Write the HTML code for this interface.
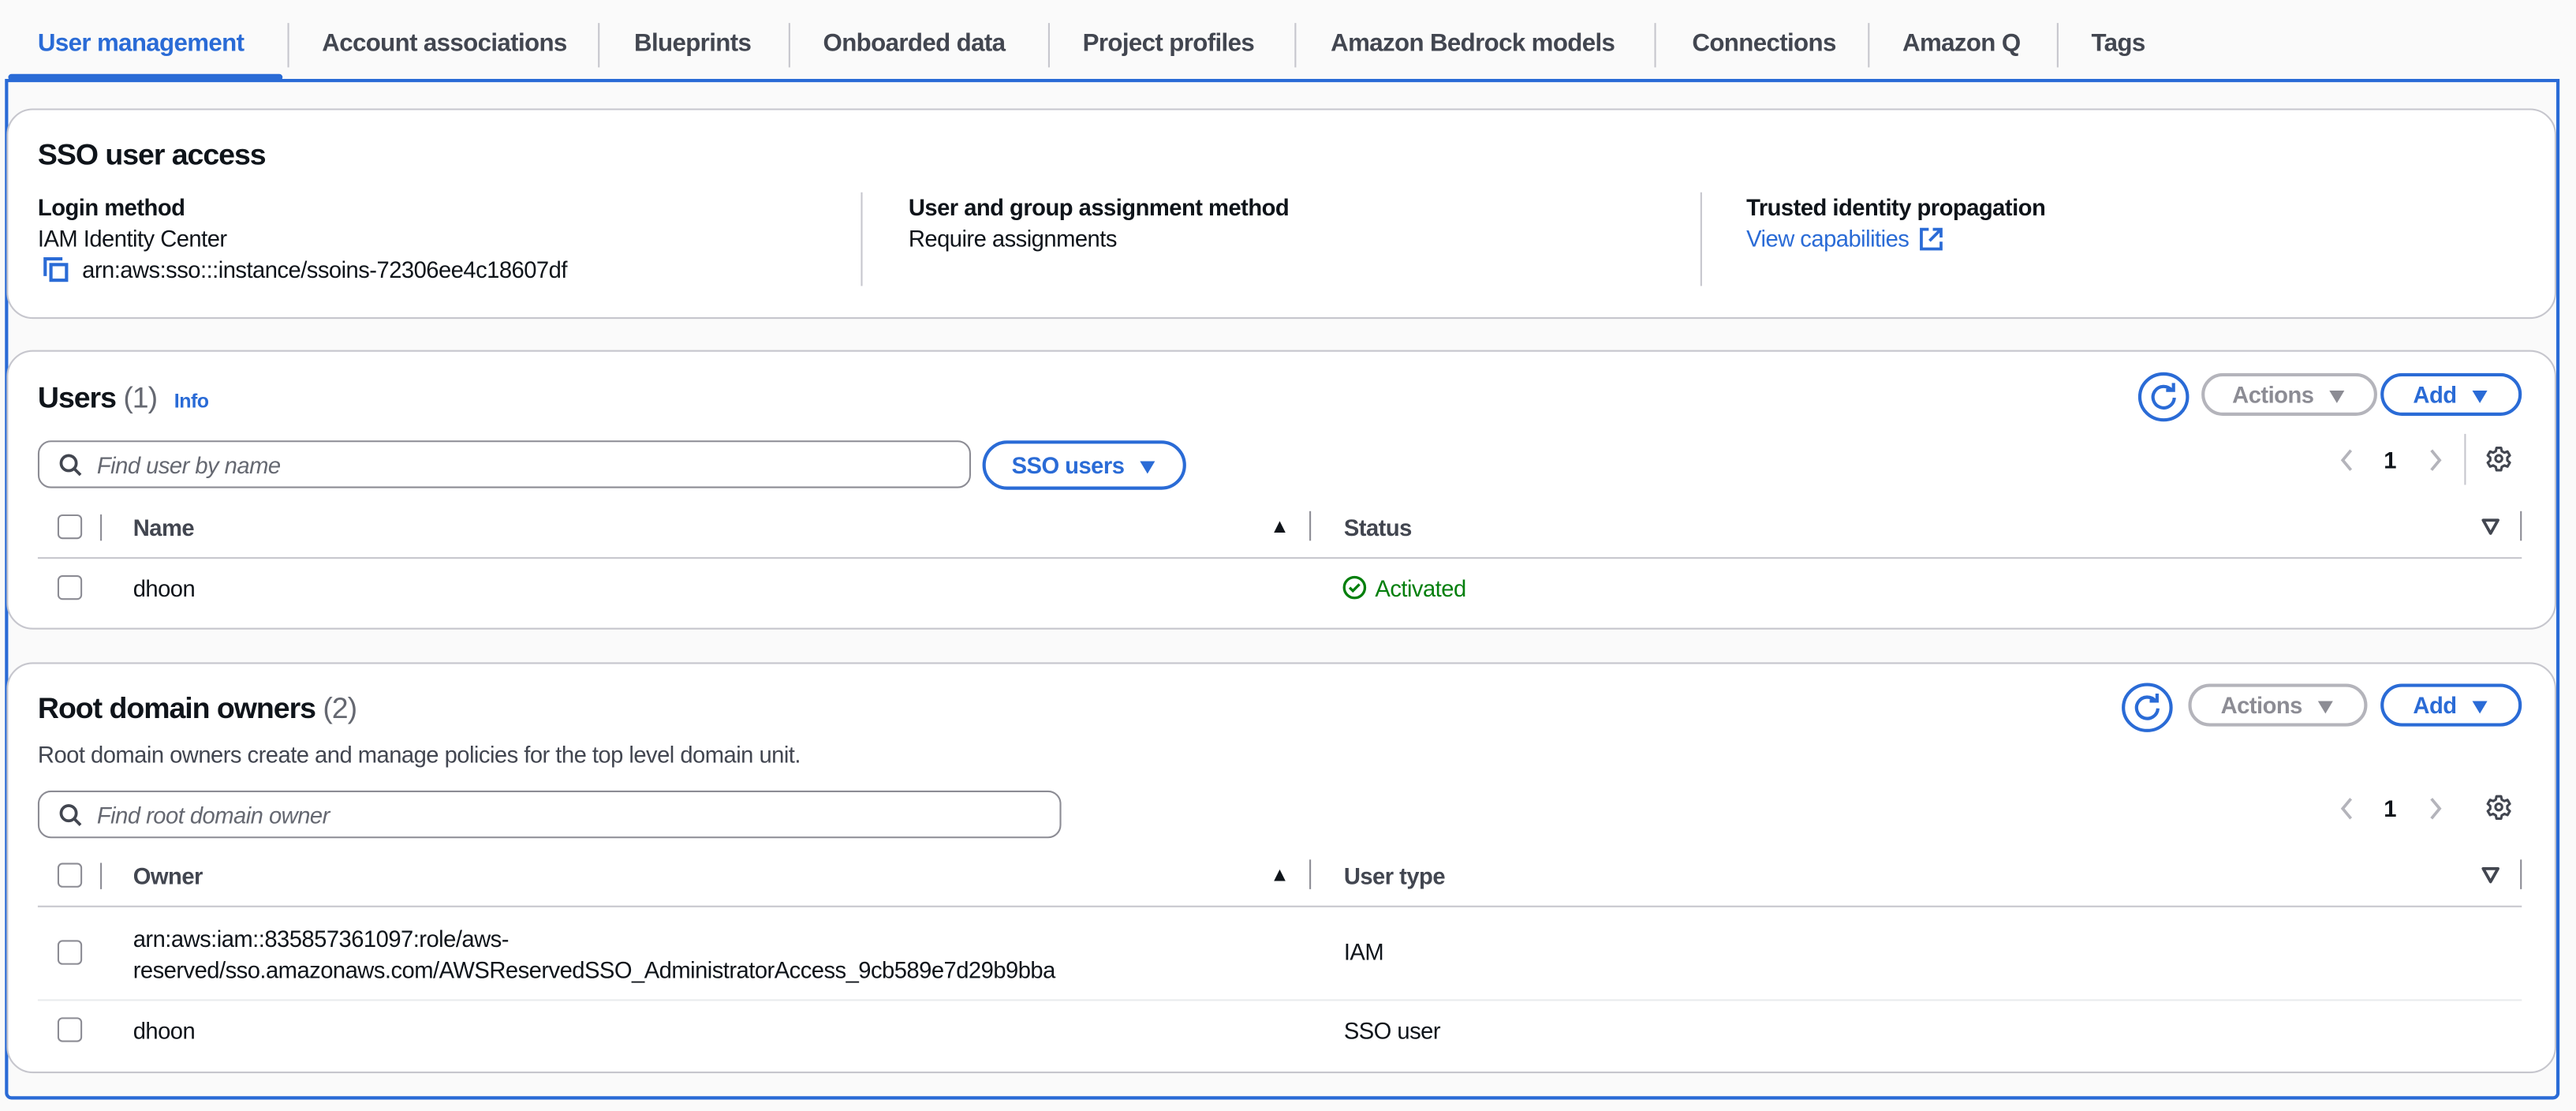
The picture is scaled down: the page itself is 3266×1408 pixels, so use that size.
<!DOCTYPE html>
<html><head><meta charset="utf-8"><style>
html,body{margin:0;padding:0;width:3266px;height:1408px;overflow:hidden;background:#fafafa}
#s{position:absolute;left:0;top:0;width:1568px;height:676px;transform:scale(2.08291);transform-origin:0 0;font-family:"Liberation Sans",sans-serif;color:#0f141a;font-size:14px;letter-spacing:-0.25px}
.a{position:absolute;white-space:nowrap}
.tab{position:absolute;top:18px;font-size:15px;font-weight:bold;color:#424650;letter-spacing:-0.3px}
.sep{position:absolute;top:14px;height:27px;width:1px;background:#c6c6cd}
.card{position:absolute;left:4px;width:1550px;background:#fff;border:1px solid #c6c6cd;border-radius:16px}
.b{font-weight:bold}
.h2{font-size:18px;font-weight:bold;letter-spacing:-0.5px}
.vd{position:absolute;width:1px;background:#c6c6cd}
.pill{position:absolute;height:26px;border:2px solid;border-radius:16px;font-weight:bold;font-size:14px;box-sizing:border-box;text-align:center;line-height:23px}
.cb{position:absolute;width:13px;height:13px;border:1.5px solid #8c8c94;border-radius:3px;background:#fff}
.hl{position:absolute;height:1px;background:#c6c6cd}
.rl{position:absolute;height:1px;background:#e9ebed}
.search{position:absolute;height:29px;border:1px solid #8c8c94;border-radius:8px;box-sizing:border-box;background:#fff}
.search span{position:absolute;left:35px;top:6px;font-style:italic;color:#656871;font-size:14px}
.tri{font-size:13px;display:inline-block;transform:scaleX(1.2)}
</style></head><body><div id="s">
<div class="tab" style="left:23px;color:#2a6bd6">User management</div>
<div class="sep" style="left:175px"></div>
<div class="tab" style="left:196px">Account associations</div>
<div class="sep" style="left:364px"></div>
<div class="tab" style="left:386px">Blueprints</div>
<div class="sep" style="left:480px"></div>
<div class="tab" style="left:501px">Onboarded data</div>
<div class="sep" style="left:638px"></div>
<div class="tab" style="left:659px">Project profiles</div>
<div class="sep" style="left:788px"></div>
<div class="tab" style="left:810px">Amazon Bedrock models</div>
<div class="sep" style="left:1007px"></div>
<div class="tab" style="left:1030px">Connections</div>
<div class="sep" style="left:1137px"></div>
<div class="tab" style="left:1158px">Amazon Q</div>
<div class="sep" style="left:1252px"></div>
<div class="tab" style="left:1273px">Tags</div>
<div class="a" style="left:5px;top:45px;width:167px;height:4px;background:#2a6bd6;border-radius:2px"></div>
<div class="a" style="left:3px;top:48px;width:1551px;height:617px;border:2px solid #2a6bd6;border-radius:0 0 4px 4px;background:#fafafa"></div>

<div class="card" style="top:66px;height:126px"></div>
<div class="a h2" style="left:23px;top:84px">SSO user access</div>
<div class="a b" style="left:23px;top:118px">Login method</div>
<div class="a" style="left:23px;top:137px">IAM Identity Center</div>
<svg class="a" style="left:26px;top:156px" width="16" height="16" viewBox="0 0 16 16"><path d="M1.5 12V1.5H12" fill="none" stroke="#2a6bd6" stroke-width="2"/><rect x="5" y="5" width="9.5" height="9.5" fill="none" stroke="#2a6bd6" stroke-width="2"/></svg>
<div class="a" style="left:50px;top:156px">arn:aws:sso:::instance/ssoins-72306ee4c18607df</div>
<div class="vd" style="left:524px;top:117px;height:57px"></div>
<div class="a b" style="left:553px;top:118px">User and group assignment method</div>
<div class="a" style="left:553px;top:137px">Require assignments</div>
<div class="vd" style="left:1035px;top:117px;height:57px"></div>
<div class="a b" style="left:1063px;top:118px">Trusted identity propagation</div>
<div class="a" style="left:1063px;top:137px;color:#2a6bd6">View capabilities</div>
<svg class="a" style="left:1168px;top:138px" width="15" height="15" viewBox="0 0 15 15"><path d="M6 1.5H1.5v12h12V9M8.5 1.5h5v5M13.5 1.5L6.5 8.5" fill="none" stroke="#2a6bd6" stroke-width="1.8"/></svg>

<div class="card" style="top:213px;height:168px"></div>
<div class="a h2" style="left:23px;top:232px">Users <span style="font-weight:normal;color:#656871">(1)</span></div>
<div class="a b" style="left:106px;top:237px;font-size:12px;color:#2a6bd6">Info</div>
<svg class="a" style="left:1301px;top:226px" width="32" height="31" viewBox="0 0 32 31"><ellipse cx="16" cy="15.5" rx="14.5" ry="14" fill="#fff" stroke="#2a6bd6" stroke-width="2"/><path d="M21 11.5A6.5 6.5 0 1 0 22.5 16" fill="none" stroke="#2a6bd6" stroke-width="2"/><path d="M17.5 11.5H22V7" fill="none" stroke="#2a6bd6" stroke-width="2"/></svg>
<div class="pill" style="left:1340px;top:227px;width:107px;border-color:#b4b4bb;color:#8c8c94;background:#fff">Actions &nbsp;<span class="tri">▼</span></div>
<div class="pill" style="left:1449px;top:227px;width:86px;border-color:#2a6bd6;color:#2a6bd6;background:#fff">Add &nbsp;<span class="tri">▼</span></div>
<div class="search" style="left:23px;top:268px;width:568px"><svg class="a" style="left:12px;top:7px" width="14" height="14" viewBox="0 0 14 14"><circle cx="5.8" cy="5.8" r="4.6" fill="none" stroke="#424650" stroke-width="1.8"/><path d="M9.2 9.2L13 13" stroke="#424650" stroke-width="1.8"/></svg><span>Find user by name</span></div>
<div class="pill" style="left:598px;top:268px;width:124px;height:30px;line-height:27px;border-color:#2a6bd6;color:#2a6bd6;background:#fff">SSO users &nbsp;<span class="tri">▼</span></div>
<svg class="a" style="left:1424px;top:272px" width="10" height="16" viewBox="0 0 10 16"><path d="M7 2L2 8l5 6" fill="none" stroke="#b4b4bb" stroke-width="1.8"/></svg>
<div class="a b" style="left:1451px;top:272px">1</div>
<svg class="a" style="left:1477px;top:272px" width="10" height="16" viewBox="0 0 10 16"><path d="M3 2l5 6-5 6" fill="none" stroke="#b4b4bb" stroke-width="1.8"/></svg>
<div class="vd" style="left:1500px;top:264px;height:31px"></div>
<svg class="a" style="left:1513px;top:271px" width="16" height="16" viewBox="0 0 16 16"><path d="M6.6 1.5h2.8l.4 2 1.6.9 1.9-.7 1.4 2.4-1.5 1.3v1.8l1.5 1.3-1.4 2.4-1.9-.7-1.6.9-.4 2H6.6l-.4-2-1.6-.9-1.9.7-1.4-2.4 1.5-1.3V7.4L1.3 6.1l1.4-2.4 1.9.7 1.6-.9z" fill="none" stroke="#424650" stroke-width="1.5" stroke-linejoin="round"/><circle cx="8" cy="8" r="2" fill="none" stroke="#424650" stroke-width="1.5"/></svg>
<div class="cb" style="left:35px;top:313px"></div>
<div class="vd" style="left:61px;top:313px;height:16px;background:#8c8c94"></div>
<div class="a b" style="left:81px;top:313px;color:#424650">Name</div>
<div class="a" style="left:773px;top:313px;font-size:12px">▲</div>
<div class="vd" style="left:797px;top:311px;height:18px;background:#8c8c94"></div>
<div class="a b" style="left:818px;top:313px;color:#424650">Status</div>
<svg class="a" style="left:1510px;top:315px" width="12" height="11" viewBox="0 0 12 11"><path d="M1.5 1.5h9L6 9.5z" fill="none" stroke="#424650" stroke-width="1.8" stroke-linejoin="round"/></svg>
<div class="vd" style="left:1534px;top:311px;height:18px;background:#8c8c94"></div>
<div class="hl" style="left:23px;top:339px;width:1512px"></div>
<div class="cb" style="left:35px;top:350px"></div>
<div class="a" style="left:81px;top:350px">dhoon</div>
<svg class="a" style="left:817px;top:350px" width="15" height="15" viewBox="0 0 15 15"><circle cx="7.5" cy="7.5" r="6.3" fill="none" stroke="#037f0c" stroke-width="1.6"/><path d="M4.5 7.5l2 2 4-4" fill="none" stroke="#037f0c" stroke-width="1.6"/></svg>
<div class="a" style="left:837px;top:350px;color:#037f0c">Activated</div>

<div class="card" style="top:403px;height:248px"></div>
<div class="a h2" style="left:23px;top:421px">Root domain owners <span style="font-weight:normal;color:#656871">(2)</span></div>
<div class="a" style="left:23px;top:451px;color:#424650">Root domain owners create and manage policies for the top level domain unit.</div>
<svg class="a" style="left:1291px;top:415px" width="32" height="31" viewBox="0 0 32 31"><ellipse cx="16" cy="15.5" rx="14.5" ry="14" fill="#fff" stroke="#2a6bd6" stroke-width="2"/><path d="M21 11.5A6.5 6.5 0 1 0 22.5 16" fill="none" stroke="#2a6bd6" stroke-width="2"/><path d="M17.5 11.5H22V7" fill="none" stroke="#2a6bd6" stroke-width="2"/></svg>
<div class="pill" style="left:1332px;top:416px;width:109px;border-color:#b4b4bb;color:#8c8c94;background:#fff">Actions &nbsp;<span class="tri">▼</span></div>
<div class="pill" style="left:1449px;top:416px;width:86px;border-color:#2a6bd6;color:#2a6bd6;background:#fff">Add &nbsp;<span class="tri">▼</span></div>
<div class="search" style="left:23px;top:481px;width:623px"><svg class="a" style="left:12px;top:7px" width="14" height="14" viewBox="0 0 14 14"><circle cx="5.8" cy="5.8" r="4.6" fill="none" stroke="#424650" stroke-width="1.8"/><path d="M9.2 9.2L13 13" stroke="#424650" stroke-width="1.8"/></svg><span>Find root domain owner</span></div>
<svg class="a" style="left:1424px;top:484px" width="10" height="16" viewBox="0 0 10 16"><path d="M7 2L2 8l5 6" fill="none" stroke="#b4b4bb" stroke-width="1.8"/></svg>
<div class="a b" style="left:1451px;top:484px">1</div>
<svg class="a" style="left:1477px;top:484px" width="10" height="16" viewBox="0 0 10 16"><path d="M3 2l5 6-5 6" fill="none" stroke="#b4b4bb" stroke-width="1.8"/></svg>
<svg class="a" style="left:1513px;top:483px" width="16" height="16" viewBox="0 0 16 16"><path d="M6.6 1.5h2.8l.4 2 1.6.9 1.9-.7 1.4 2.4-1.5 1.3v1.8l1.5 1.3-1.4 2.4-1.9-.7-1.6.9-.4 2H6.6l-.4-2-1.6-.9-1.9.7-1.4-2.4 1.5-1.3V7.4L1.3 6.1l1.4-2.4 1.9.7 1.6-.9z" fill="none" stroke="#424650" stroke-width="1.5" stroke-linejoin="round"/><circle cx="8" cy="8" r="2" fill="none" stroke="#424650" stroke-width="1.5"/></svg>
<div class="cb" style="left:35px;top:525px"></div>
<div class="vd" style="left:61px;top:525px;height:16px;background:#8c8c94"></div>
<div class="a b" style="left:81px;top:525px;color:#424650">Owner</div>
<div class="a" style="left:773px;top:525px;font-size:12px">▲</div>
<div class="vd" style="left:797px;top:523px;height:18px;background:#8c8c94"></div>
<div class="a b" style="left:818px;top:525px;color:#424650">User type</div>
<svg class="a" style="left:1510px;top:527px" width="12" height="11" viewBox="0 0 12 11"><path d="M1.5 1.5h9L6 9.5z" fill="none" stroke="#424650" stroke-width="1.8" stroke-linejoin="round"/></svg>
<div class="vd" style="left:1534px;top:523px;height:18px;background:#8c8c94"></div>
<div class="hl" style="left:23px;top:551px;width:1512px"></div>
<div class="cb" style="left:35px;top:572px"></div>
<div class="a" style="left:81px;top:562px;line-height:19px">arn:aws:iam::835857361097:role/aws-<br>reserved/sso.amazonaws.com/AWSReservedSSO_AdministratorAccess_9cb589e7d29b9bba</div>
<div class="a" style="left:818px;top:571px">IAM</div>
<div class="rl" style="left:23px;top:608px;width:1512px"></div>
<div class="cb" style="left:35px;top:619px"></div>
<div class="a" style="left:81px;top:619px">dhoon</div>
<div class="a" style="left:818px;top:619px">SSO user</div>
</div></body></html>
